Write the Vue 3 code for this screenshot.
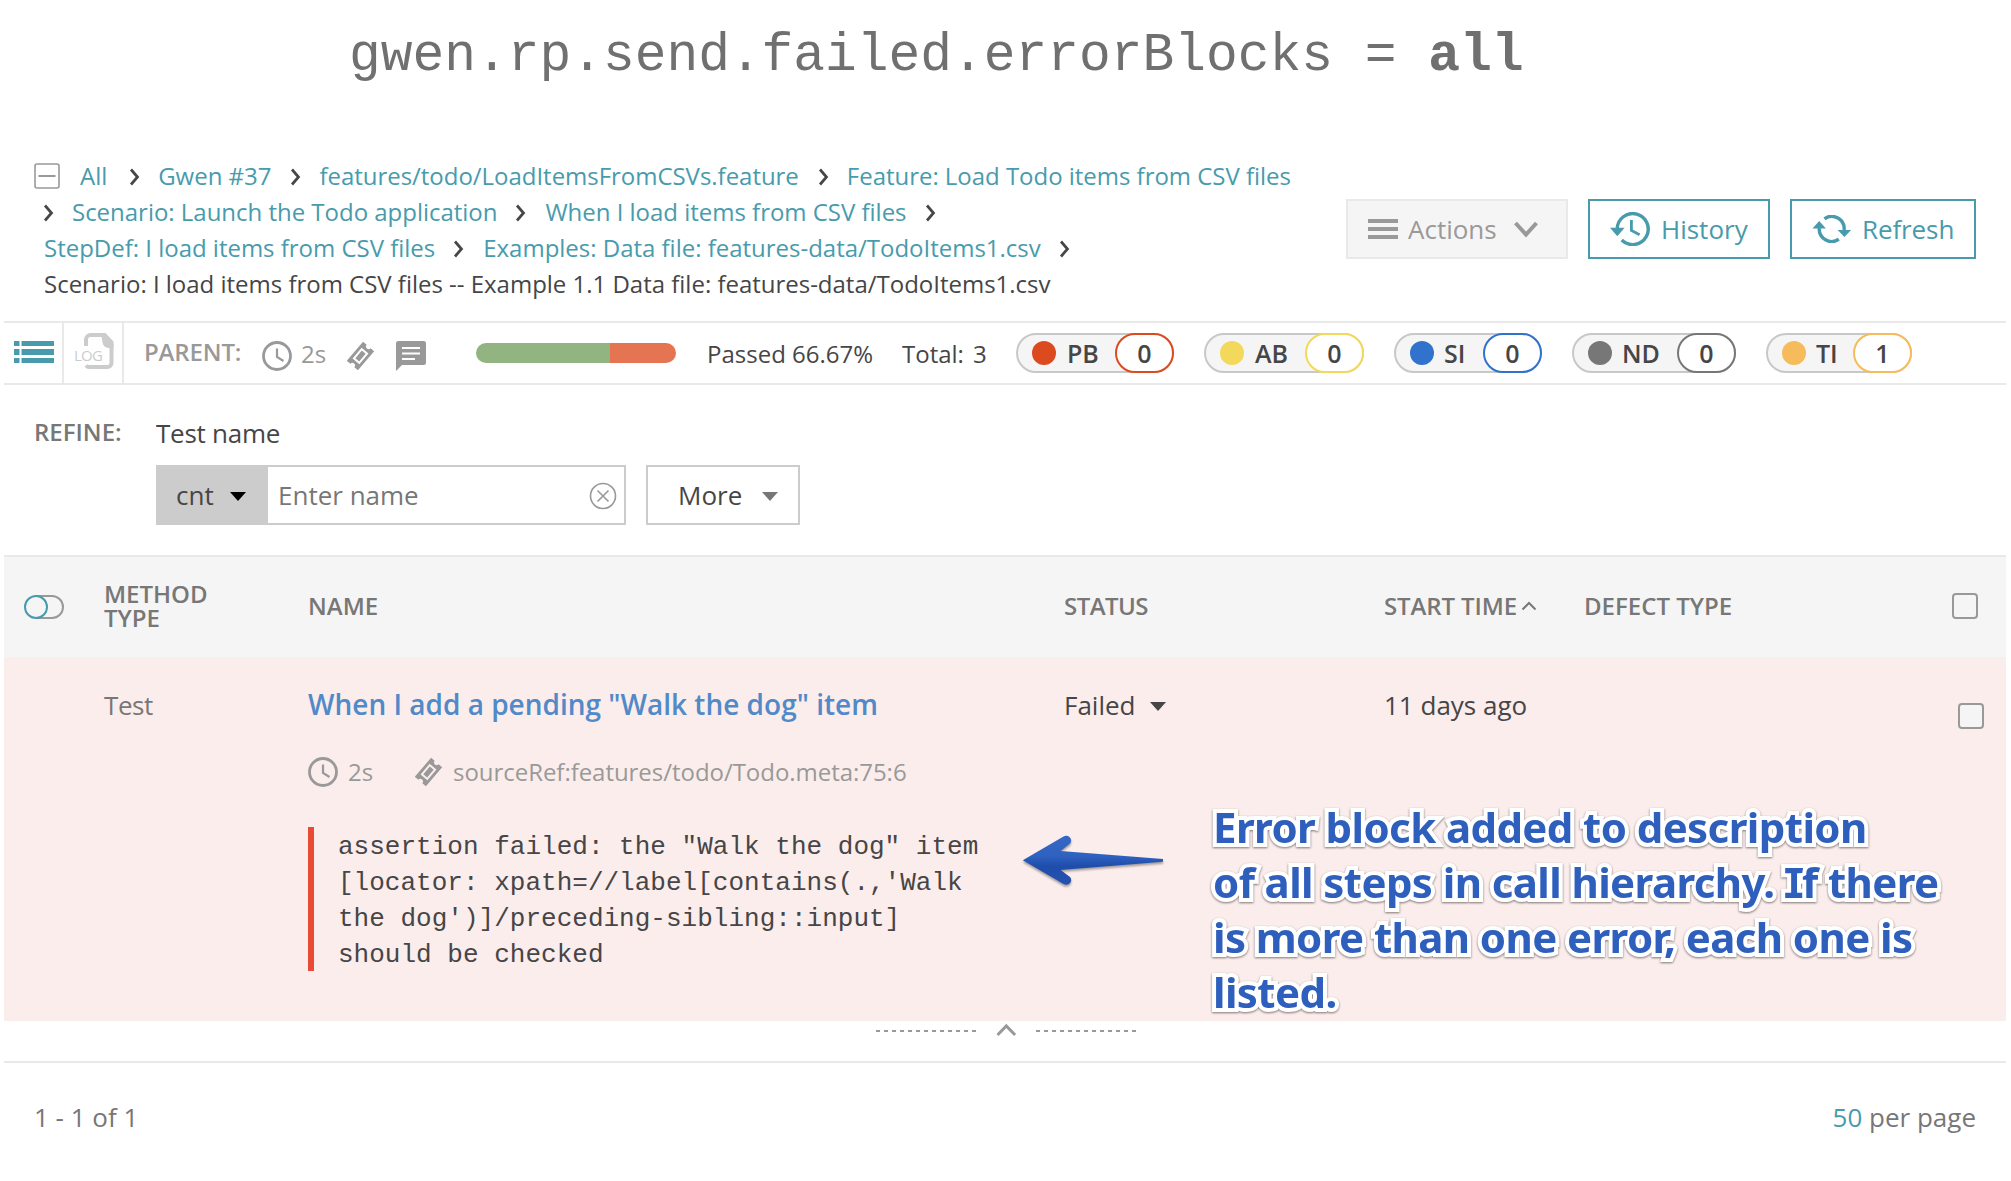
<script setup>
const crumbs = [
  [
    { text: 'All' },
    { sep: true },
    { text: 'Gwen #37' },
    { sep: true },
    { text: 'features/todo/LoadItemsFromCSVs.feature' },
    { sep: true },
    { text: 'Feature: Load Todo items from CSV files' }
  ],
  [
    { sep: true },
    { text: 'Scenario: Launch the Todo application' },
    { sep: true },
    { text: 'When I load items from CSV files' },
    { sep: true }
  ],
  [
    { text: 'StepDef: I load items from CSV files' },
    { sep: true },
    { text: 'Examples: Data file: features-data/TodoItems1.csv' },
    { sep: true }
  ],
  [{ text: 'Scenario: I load items from CSV files -- Example 1.1 Data file: features-data/TodoItems1.csv', current: true }]
]
const defects = [
  { name: 'PB', count: 0, color: '#dc4a20', width: 158 },
  { name: 'AB', count: 0, color: '#f3d95b', width: 160 },
  { name: 'SI', count: 0, color: '#3072cc', width: 148 },
  { name: 'ND', count: 0, color: '#777777', width: 164 },
  { name: 'TI', count: 1, color: '#f6bb5b', width: 146 }
]
</script>

<template>
  <div class="page">
    <h1 class="title">gwen.rp.send.failed.errorBlocks = <b>all</b></h1>

    <header class="top">
      <svg class="minus" width="26" height="26" viewBox="0 0 26 26"><rect x="1" y="1" width="24" height="24" rx="2" fill="#fff" stroke="#999" stroke-width="1.6" /><path d="M4.500 13h17" stroke="#999" stroke-width="2" /></svg>
      <nav class="crumbs">
        <div v-for="(line, i) in crumbs" :key="i" class="line" :class="'l' + i">
          <template v-for="(c, j) in line" :key="j">
            <svg v-if="c.sep" class="sep" width="12" height="18" viewBox="0 0 12 18"><path d="M2 1.500l6.500 7.500l-6.500 7.500" fill="none" stroke="#464547" stroke-width="2.700" /></svg>
            <span v-else :class="{ current: c.current }">{{ c.text }}</span>
          </template>
        </div>
      </nav>
      <div class="buttons">
        <button class="btn actions">
          <svg width="30" height="20" viewBox="0 0 30 20"><path d="M0 2h30M0 10h30M0 18h30" stroke="#999" stroke-width="4" /></svg>
          <span>Actions</span>
          <svg class="chev" width="26" height="18" viewBox="0 0 26 18"><path d="M2.500 3l10.500 11.500l10.500-11.500" fill="none" stroke="#999" stroke-width="4" /></svg>
        </button>
        <button class="btn history">
          <svg width="40" height="34" viewBox="0 0 40 34"><path d="M7.200 17a15.500 15.500 0 1 1 4.500 11" fill="none" stroke="#489bac" stroke-width="3.400" /><path d="M0 15.700h14.600l-7.300 8.500z" fill="#489bac" /><path d="M21.400 8v10.500l8.200 4.300" fill="none" stroke="#489bac" stroke-width="2.800" /></svg>
          <span>History</span>
        </button>
        <button class="btn refresh">
          <svg width="40" height="28" viewBox="0 0 40 28"><path d="M12.500 3.800a12.400 12.400 0 0 1 19.600 11.200M26.800 24.200a12.400 12.400 0 0 1-19.500-11.200" fill="none" stroke="#489bac" stroke-width="3.400" /><path d="M25.700 15h13.400l-6.700 7zM0.500 13.400h13.400l-6.700-7.400z" fill="#489bac" /></svg>
          <span>Refresh</span>
        </button>
      </div>
    </header>

    <section class="toolbar">
      <div class="tab"><svg width="40" height="22" viewBox="0 0 40 22"><path d="M0 0h5.500v5H0zM7.500 0H40v5H7.500zM0 8h5.500v6H0zM7.500 8H40v6H7.500zM0 17h5.500v5H0zM7.500 17H40v5H7.500z" fill="#489bac" /></svg></div>
      <div class="tab"><svg class="logicon" width="42" height="36" viewBox="0 0 42 36"><path d="M13 13V6.500a4.500 4.500 0 0 1 4.500-4.500H30M38.500 11V30a4 4 0 0 1-4 4H16a4 4 0 0 1-3-1.500" fill="none" stroke="#ccc" stroke-width="4" /><path d="M28 0h4.500L40.500 8.500V15H35.500a6 6 0 0 1-6-6z" fill="#ccc" /><text x="1" y="28" class="log">LOG</text></svg></div>
      <span class="parent">PARENT:</span>
      <svg class="clock" width="30" height="30" viewBox="0 0 30 30"><circle cx="15" cy="15" r="13.500" fill="none" stroke="#999" stroke-width="2.800" /><path d="M15 7.500v8.500l6.500 4" fill="none" stroke="#999" stroke-width="2.200" /></svg>
      <span class="dur">2s</span>
      <svg class="ticket" width="28" height="28" viewBox="-13.500 -14 28 28"><g transform="rotate(-49.500)"><path d="M-12.500-7.300H12.500V-2.600a2.600 2.600 0 0 0 0 5.200V7.300H-12.500V2.600a2.600 2.600 0 0 0 0-5.200z" fill="#999" /><path d="M-6-3.500H6V3.500H-6z" fill="none" stroke="#fff" stroke-width="2" /></g></svg>
      <svg class="msg" width="30" height="30" viewBox="0 0 30 30"><path d="M2.500 0h25A2.500 2.500 0 0 1 30 2.500v19A2.500 2.500 0 0 1 27.500 24H6l-6 6V2.500A2.500 2.500 0 0 1 2.500 0z" fill="#999" /><path d="M6 7h18M6 12.500h18M6 18h13" stroke="#fff" stroke-width="2" /></svg>
      <div class="bar"><i></i><b></b></div>
      <span class="passed">Passed 66.67%</span>
      <span class="total">Total:</span><span class="three">3</span>
      <div class="pills">
        <div v-for="d in defects" :key="d.name" class="pill" :style="{ width: d.width + 'px' }">
          <i :style="{ background: d.color }"></i><span>{{ d.name }}</span>
          <b :style="{ borderColor: d.color }">{{ d.count }}</b>
        </div>
      </div>
    </section>

    <section class="refine">
      <span class="rlabel">REFINE:</span>
      <div>
        <div class="tname">Test name</div>
        <div class="controls">
          <div class="field">
            <div class="cnt"><span>cnt</span><svg width="16" height="9" viewBox="0 0 16 9"><path d="M0 0h16l-8 9z" fill="#000" /></svg></div>
            <span class="ph">Enter name</span>
            <svg class="clear" width="28" height="28" viewBox="0 0 28 28"><circle cx="14" cy="14" r="12.500" fill="none" stroke="#999" stroke-width="1.600" /><path d="M8.500 8.500l11 11M19.500 8.500l-11 11" stroke="#999" stroke-width="1.600" /></svg>
          </div>
          <div class="more"><span>More</span><svg width="16" height="9" viewBox="0 0 16 9"><path d="M0 0h16l-8 9z" fill="#777" /></svg></div>
        </div>
      </div>
    </section>

    <section class="grid head">
      <svg class="toggle" width="40" height="24" viewBox="0 0 40 24"><path d="M12 1h16a11 11 0 0 1 0 22H12" fill="none" stroke="#999" stroke-width="2" /><circle cx="12" cy="12" r="11" fill="#f5f5f5" stroke="#489bac" stroke-width="2" /></svg>
      <span class="method">METHOD<br />TYPE</span>
      <span>NAME</span>
      <span class="sthead">STATUS</span>
      <span class="start">START TIME<svg width="16" height="10" viewBox="0 0 16 10"><path d="M1.500 8.500l6.500-6.500l6.500 6.500" fill="none" stroke="#777" stroke-width="2" /></svg></span>
      <span>DEFECT TYPE</span>
      <i class="check"></i>
    </section>

    <section class="grid row">
      <i></i>
      <span class="type">Test</span>
      <div>
        <div class="name">When I add a pending "Walk the dog" item</div>
        <div class="meta">
          <svg width="30" height="30" viewBox="0 0 30 30"><circle cx="15" cy="15" r="13.500" fill="none" stroke="#999" stroke-width="2.800" /><path d="M15 7.500v8.500l6.500 4" fill="none" stroke="#999" stroke-width="2.200" /></svg>
          <span class="dur">2s</span>
          <svg class="ticket" width="28" height="28" viewBox="-13.500 -14 28 28"><g transform="rotate(-49.500)"><path d="M-12.500-7.300H12.500V-2.600a2.600 2.600 0 0 0 0 5.200V7.300H-12.500V2.600a2.600 2.600 0 0 0 0-5.200z" fill="#999" /><path d="M-6-3.500H6V3.500H-6z" fill="none" stroke="#fbedeb" stroke-width="2" /></g></svg>
          <span class="src">sourceRef:features/todo/Todo.meta:75:6</span>
        </div>
        <div class="error"><div>assertion failed: the "Walk the dog" item<br />[locator: xpath=//label[contains(.,'Walk<br />the dog')]/preceding-sibling::input]<br />should be checked</div></div>
      </div>
      <span class="status"><em>Failed</em><svg width="16" height="9" viewBox="0 0 16 9"><path d="M0 0h16l-8 9z" fill="#464547" /></svg></span>
      <span class="ago">11 days ago</span>
      <i></i>
      <i class="check"></i>
      <svg class="arrow" width="144" height="54" viewBox="0 0 144 54">
        <defs><linearGradient id="ag" x1="0" y1="0" x2="0" y2="1"><stop offset="0" stop-color="#3468c6" /><stop offset=".42" stop-color="#2f61c0" /><stop offset=".62" stop-color="#1f4dab" /><stop offset="1" stop-color="#2552b2" /></linearGradient></defs>
        <path d="M0.800 26.300L41.500 2.500C46.500 0 51 5 48.300 9.300L38.700 17L141 25V27.700L38.700 36L48.300 43.300C51 47.500 47 52.500 41.500 50z" fill="url(#ag)" />
      </svg>
      <p class="note">Error block added to description<br />of all steps in call hierarchy. <span class="cap">I</span>f there<br />is more than one error, each one is<br />listed.</p>
    </section>

    <div class="collapse"><i></i><svg width="22" height="14" viewBox="0 0 22 14"><path d="M1.500 12l8.800-9l8.800 9" fill="none" stroke="#999" stroke-width="3" /></svg><i></i></div>

    <footer class="foot"><span>1 - 1 of 1</span><span class="pp"><b>50</b> per page</span></footer>
  </div>
</template>

<style>
body { margin: 0; background: #fff; }
</style>

<style scoped>
.page { width: 2011px; height: 1181px; overflow: hidden; background: #fff; font-family: "Open Sans", sans-serif; font-size: 26px; color: #464547; }
.page * { box-sizing: border-box; }
.page svg { display: block; flex: none; }
.page span { white-space: nowrap; }
.title { margin: 0; height: 158px; padding: 24px 0 0 349px; font: 400 52.900px/64px "Liberation Mono", monospace; color: #707070; white-space: nowrap; }
.top { display: flex; height: 163px; padding-left: 34px; font-size: 24px; }
.minus { margin-top: 5px; }
.crumbs { width: 1286px; margin-left: -16px; }
.line { display: flex; height: 36px; line-height: 36px; color: #489bac; align-items: center; letter-spacing: -0.014px; }
.l0 { padding-left: 36px; letter-spacing: -0.03px; }
.sep { margin: 2px 18px 0; }
.l0 .sep { margin: 2px 17px 0 19px; }
.l0 .sep:nth-child(2) { margin-left: 22px; }
.l1 { letter-spacing: -0.02px; }
.l1 .sep:first-child { margin: 2px 17px 0 -1px; }
.current { color: #464547; }
.buttons { display: flex; gap: 20px; margin: 41px 0 0 16px; }
.btn { display: flex; align-items: center; height: 60px; padding: 0 0 0 20px; border: 2px solid #489bac; background: #fff; color: #489bac; font: 400 26px/56px "Open Sans", sans-serif; }
.actions { width: 222px; background: #f5f5f5; border-color: #e9e9e9; color: #999; }
.actions span { margin-left: 10px; }
.chev { margin-left: 16px; }
.history { width: 182px; }
.history span { margin-left: 11px; }
.refresh { width: 186px; }
.refresh span { margin-left: 10px; letter-spacing: -0.1px; }
.toolbar { display: flex; align-items: center; margin-left: 4px; width: 2002px; height: 64px; border-top: 2px solid #e9e9e9; border-bottom: 2px solid #e9e9e9; font-size: 24px; line-height: 36px; }
.tab { display: flex; align-items: center; justify-content: center; width: 60px; height: 60px; border-right: 2px solid #e9e9e9; padding-left: 1px; }
.tab svg { margin-bottom: 2px; }
.tab .logicon { margin-bottom: 4px; }
.log { font: 15px "Open Sans", sans-serif; fill: #ccc; letter-spacing: -0.8px; }
.parent { width: 118px; margin: -3px 0 0 20px; font-weight: 600; color: #999; letter-spacing: -0.15px; }
.clock { margin-top: 5px; }
.dur { color: #999; margin-left: 9px; width: 46px; }
.toolbar .dur { margin-top: 2px; }
.msg { margin: 5px 0 0 21px; }
.toolbar .ticket { margin-top: 5px; }
.bar { display: flex; width: 200px; height: 20px; margin-left: 50px; border-radius: 10px; overflow: hidden; }
.bar i { width: 134px; background: #92b480; }
.bar b { flex: 1; background: #e57452; }
.passed { width: 195px; margin: 1px 0 0 31px; }
.total { width: 71px; margin-top: 1px; }
.three { width: 43px; margin-top: 1px; }
.pills { display: flex; gap: 30px; }
.pill { display: flex; align-items: center; height: 40px; border: 2px solid #c8c8c8; border-radius: 20px; background: #f5f5f5; padding-left: 14px; font-weight: 600; font-size: 25px; }
.pill i { width: 24px; height: 24px; border-radius: 50%; }
.pill span { margin-left: 11px; }
.pill:nth-child(n+3) span { margin-left: 10px; }
.pill b { margin: 0 -2px 0 auto; width: 59px; height: 40px; line-height: 36px; border: 2px solid; border-radius: 20px; background: #fff; text-align: center; font-weight: 600; }
.refine { display: flex; height: 170px; padding: 30px 0 0 34px; }
.rlabel { width: 122px; font-size: 24px; line-height: 36px; font-weight: 600; color: #777; margin-top: -1px; }
.tname { line-height: 36px; height: 50px; letter-spacing: -0.25px; }
.controls { display: flex; gap: 20px; }
.field { display: flex; align-items: center; width: 470px; height: 60px; border: 2px solid #ccc; }
.cnt { display: flex; align-items: center; width: 110px; height: 56px; background: #ccc; padding-left: 18px; }
.cnt svg { margin-left: 16px; margin-top: 2px; }
.ph { margin-left: 10px; color: #777; flex: 1; }
.clear { margin-right: 7px; margin-top: 2px; }
.more { display: flex; align-items: center; width: 154px; height: 60px; border: 2px solid #ccc; padding-left: 30px; }
.more svg { margin: 2px 0 0 20px; }
.grid { display: grid; grid-template-columns: 100px 204px 756px 320px 200px 368px 1fr; margin-left: 4px; width: 2002px; }
.head { height: 102px; border-top: 2px solid #e9e9e9; background: #f5f5f5; align-items: center; font-size: 24px; line-height: 24px; font-weight: 600; color: #777; padding-bottom: 2px; }
.toggle { margin: 2px 0 0 20px; }
.sthead { letter-spacing: -0.55px; }
.start { display: flex; align-items: center; gap: 4px; letter-spacing: -0.12px; }
.check { width: 26px; height: 26px; border: 2px solid #999; border-radius: 4px; background: #f5f5f5; }
.row { position: relative; height: 364px; background: #fbedeb; padding-top: 30px; line-height: 36px; align-items: start; }
.row .check { margin: 16px 0 0 6px; }
.type { color: #777; letter-spacing: -0.4px; }
.name { font-size: 28px; font-weight: 600; color: #5189c9; white-space: nowrap; margin-top: -1px; }
.meta { display: flex; align-items: center; height: 30px; margin-top: 35px; font-size: 24px; color: #999; }
.meta .dur { width: 67px; margin-left: 10px; }
.src { margin-left: 10px; letter-spacing: -0.04px; }
.error { height: 144px; margin-top: 40px; border-left: 6px solid #e94b35; padding: 2px 0 0 24px; font: 26px/36px "Liberation Mono", monospace; letter-spacing: 0.015px; white-space: nowrap; }
.status { display: flex; align-items: center; }
.status em { font-style: normal; }
.status svg { margin: 3px 0 0 14px; }
.arrow { position: absolute; left: 1018px; top: 177px; filter: drop-shadow(0 2px 1px rgba(0,0,0,.35)); }
.note { position: absolute; left: 1209px; top: 142px; margin: 0; font-family: "Noto Sans", sans-serif; font-size: 42px; line-height: 55px; letter-spacing: -0.6px; font-weight: 700; color: #2f5fbd; white-space: nowrap; -webkit-text-stroke: 8px #fff; paint-order: stroke fill; stroke-linejoin: round; filter: drop-shadow(0 1px 1px rgba(0,0,0,.5)); }
.note .cap { font-family: "DejaVu Sans Mono", monospace; font-size: 41px; line-height: 0; letter-spacing: -4.5px; margin-left: -3px; }
.collapse { display: flex; align-items: center; justify-content: center; gap: 18px; height: 40px; padding-bottom: 23px; margin-left: 2px; }
.collapse i { width: 102px; height: 2px; margin-top: 3px; background: repeating-linear-gradient(90deg, #999 0 4px, transparent 4px 8px); }
.foot { display: flex; justify-content: space-between; margin-left: 4px; width: 2002px; border-top: 2px solid #e9e9e9; padding: 36px 30px 0; line-height: 36px; color: #777; }
.pp b { font-weight: 400; color: #489bac; }
</style>
